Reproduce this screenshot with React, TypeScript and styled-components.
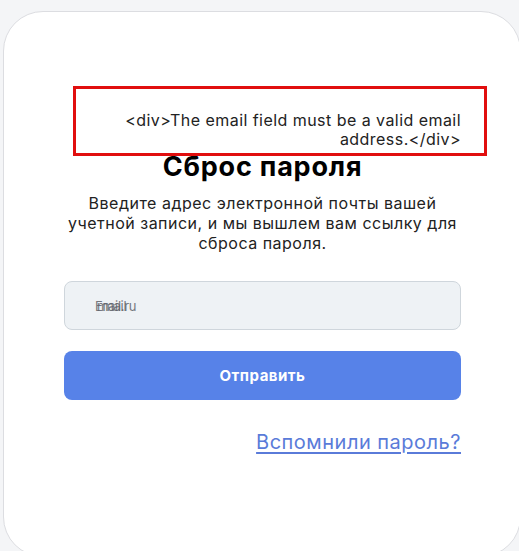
import React, { FC } from 'react';
import styled, { createGlobalStyle } from 'styled-components';

const GlobalStyle = createGlobalStyle`
	html, body {
		margin: 0;
		padding: 0;
		background: #f4f5f7;
		font-family: Inter, 'Noto Sans', sans-serif;
		letter-spacing: 0.5px;
		overflow: hidden;
	}
`;

const Page = styled.div`
	width: 519px;
	height: 551px;
	padding: 11px 0 0 3px;
	box-sizing: border-box;
	overflow: hidden;
`;

const Card = styled.div`
	position: relative;
	width: 518px;
	height: 546px;
	box-sizing: border-box;
	padding: 140px 59px 0 60px;
	background: #ffffff;
	border: 1px solid #dcdde1;
	border-radius: 40px;
	display: flex;
	flex-direction: column;
`;

const ErrorBox = styled.div`
	position: absolute;
	left: 69px;
	top: 74px;
	width: 414px;
	height: 70px;
	box-sizing: border-box;
	border: 3px solid #e10e0e;
	padding: 22px 23px 0 0;
	text-align: right;
	font-size: 16px;
	line-height: 18.5px;
	letter-spacing: 0.45px;
	color: #222;
	background: #fff;
	z-index: 1;
`;

const Title = styled.h1`
	margin: 0;
	text-align: center;
	font-size: 27px;
	line-height: 30px;
	letter-spacing: 0.8px;
	font-weight: 700;
	color: #000;
`;

const Lead = styled.p`
	margin: 11px 0 0;
	text-align: center;
	font-size: 16px;
	line-height: 20px;
	color: #222;
`;

const Field = styled.label`
	position: relative;
	margin-top: 28px;
	height: 49px;
	box-sizing: border-box;
	display: flex;
	align-items: center;
	padding-left: 30px;
	background: #eef2f5;
	border: 1px solid #cfd6dc;
	border-radius: 8px;
	font-size: 13px;
	color: #5f636a;
`;

const Hint = styled.span<{ $shift?: number }>`
	position: absolute;
	left: ${(p) => 30 + (p.$shift ?? 0)}px;
	letter-spacing: -0.3px;
	opacity: 0.85;
`;

const Submit = styled.button`
	margin-top: 21px;
	height: 49px;
	border: none;
	border-radius: 8px;
	background: #5782e8;
	color: #fff;
	font-family: inherit;
	font-size: 15px;
	font-weight: 700;
	letter-spacing: 0.5px;
	cursor: pointer;
`;

const Footer = styled.div`
	margin-top: 30px;
	display: flex;
	justify-content: flex-end;
`;

const BackLink = styled.a`
	font-size: 20px;
	line-height: 24px;
	color: #5a7bd9;
	text-decoration: underline;
	text-underline-offset: 3px;
`;

const App: FC = () => (
	<>
		<GlobalStyle />
		<Page>
			<Card>
				<ErrorBox>{'<div>The email field must be a valid email address.</div>'}</ErrorBox>
				<Title>Сброс пароля</Title>
				<Lead>Введите адрес электронной почты вашей учетной записи, и мы вышлем вам ссылку для сброса пароля.</Lead>
				<Field>
					<Hint>Email</Hint>
					<Hint $shift={2}>mail.ru</Hint>
				</Field>
				<Submit type='button'>Отправить</Submit>
				<Footer>
					<BackLink href='#'>Вспомнили пароль?</BackLink>
				</Footer>
			</Card>
		</Page>
	</>
);

export default App;
